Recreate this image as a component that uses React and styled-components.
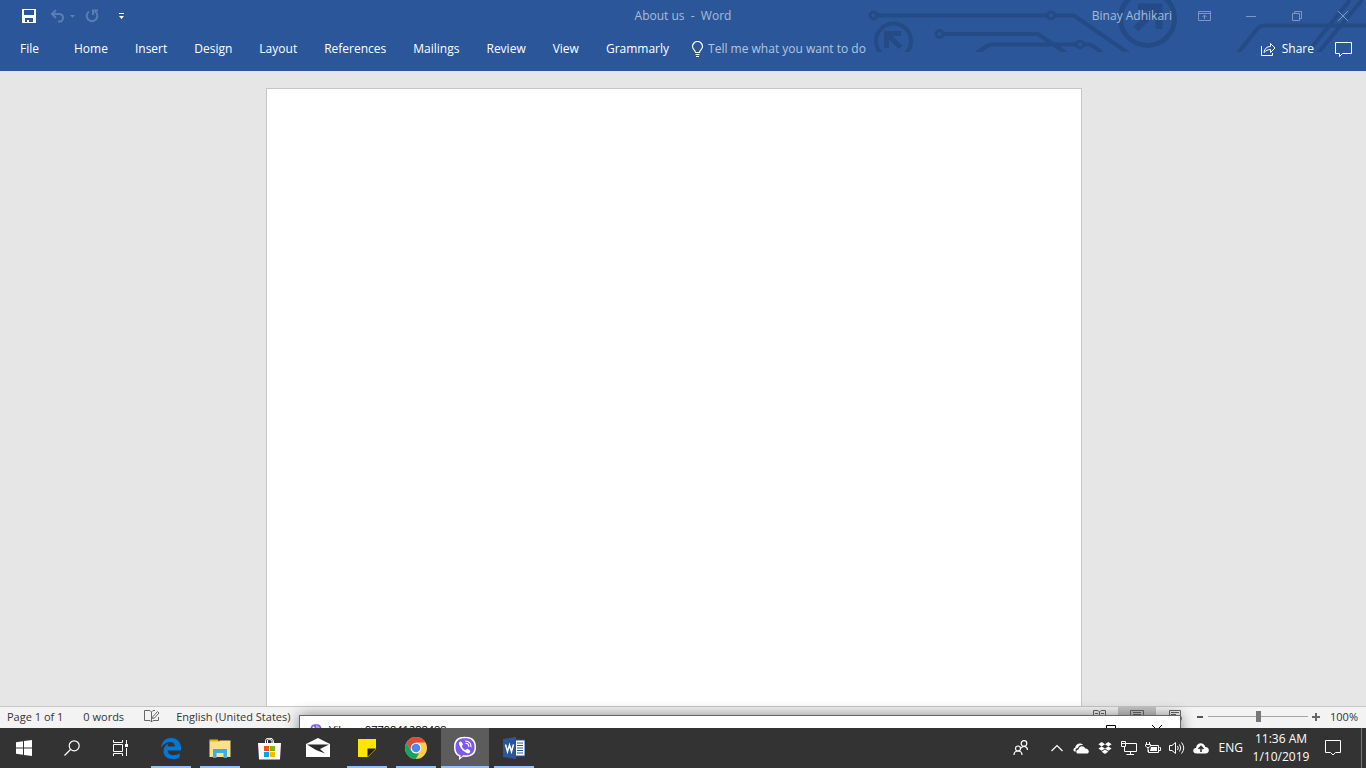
import styled, { createGlobalStyle } from "styled-components";

const tabs = ["File", "Home", "Insert", "Design", "Layout", "References", "Mailings", "Review", "View", "Grammarly"];

const GlobalStyle = createGlobalStyle`
  * {
    box-sizing: border-box;
  }

  body {
    margin: 0;
    overflow: hidden;
    font-family: "Open Sans", "Noto Sans", sans-serif;
    font-size: 12px;
    line-height: 16px;
  }

  button, input {
    font: inherit;
    color: inherit;
    margin: 0;
    padding: 0;
    border: 0;
    background: none;
  }

  svg {
    display: block;
    flex: none;
  }
`;

const Screen = styled.div`
  display: flex;
  flex-direction: column;
  height: 100vh;
  background: #e6e6e6;
`;

const Header = styled.header`
  position: relative;
  background: #2b579a;
  color: #fff;
  padding-bottom: 5px;
`;

const Circuit = styled.svg`
  position: absolute;
  top: 0;
  right: 0;
`;

const TitleBar = styled.div`
  position: relative;
  display: grid;
  grid-template-columns: 1fr auto 1fr;
  align-items: center;
  height: 32px;
`;

const QuickAccess = styled.div`
  display: flex;
  align-items: center;
  padding-left: 21px;
`;

const ToolButton = styled.button`
  display: grid;
  place-items: center;
  width: ${({ $width }) => $width || 16}px;
  height: 24px;
  margin-left: ${({ $gap }) => $gap || 0}px;
  color: ${({ $faded }) => ($faded ? "#5a7db2" : "#fff")};
`;

const Title = styled.h1`
  margin: 0;
  font-size: 12px;
  font-weight: 400;
  white-space: pre;
  color: #a9bcd8;
`;

const WindowControls = styled.div`
  display: flex;
  align-items: center;
  justify-content: flex-end;
  color: #a9bcd8;
`;

const Ribbon = styled.nav`
  position: relative;
  display: flex;
  align-items: center;
  height: 34px;
  padding: 0 14px 0 20px;
`;

const Tabs = styled.div`
  display: flex;
  gap: 27px;
`;

const Tab = styled.button`
  margin-right: ${({ $wide }) => ($wide ? 8 : 0)}px;
`;

const TellMe = styled.label`
  display: flex;
  align-items: center;
  gap: 4px;
  flex: 1;
  margin-left: 22px;

  input {
    width: 200px;
    outline: none;
  }

  input::placeholder {
    color: #b5c5de;
    opacity: 1;
  }
`;

const ShareButton = styled.button`
  display: flex;
  align-items: center;
  gap: 6px;
  margin-right: 21px;
`;

const Workspace = styled.main`
  display: flex;
  justify-content: center;
  flex: 1;
  min-height: 0;
  padding: 17px 18px 0 0;
`;

const Page = styled.article`
  width: 816px;
  background: #fff;
  border: 1px solid #c6c6c6;
  border-bottom: 0;
`;

const StatusBar = styled.footer`
  position: relative;
  display: flex;
  align-items: center;
  height: 22px;
  padding: 0 8px 2px 7px;
  background: #f3f3f3;
  border-top: 1px solid #c6c6c6;
  color: #333;
  font-size: 11px;
`;

const StatusButton = styled.button`
  margin-right: ${({ $gap }) => $gap || 20}px;
`;

const Views = styled.div`
  display: flex;
  align-self: flex-start;
  margin-left: auto;
`;

const ViewButton = styled.button`
  display: flex;
  justify-content: center;
  width: 38px;
  height: 21px;
  padding-top: 3px;
  background: ${({ $active }) => ($active ? "#c5c5c5" : "transparent")};
`;

const Zoom = styled.div`
  display: flex;
  align-items: center;
  gap: 4px;
  margin-left: 2px;
`;

const ZoomSlider = styled.input`
  appearance: none;
  width: 100px;
  height: 16px;
  background: linear-gradient(#a5a5a5, #a5a5a5) center / 100% 1px no-repeat;

  &::-webkit-slider-thumb {
    appearance: none;
    width: 5px;
    height: 11px;
    background: #777;
  }
`;

const ZoomLevel = styled.button`
  margin-left: 6px;
`;

/* The call window rises from behind the taskbar, only its top edge shows. */
const ViberWindow = styled.section`
  position: absolute;
  top: 8px;
  left: 299px;
  right: 185px;
  height: 34px;
  background: #fff;
  border: 1px solid #666;
  box-shadow: 0 0 14px rgba(0, 0, 0, 0.45);
  color: #000;
`;

const ViberTitle = styled.div`
  display: flex;
  align-items: center;
  height: 28px;
  padding: 0 18px 0 9px;
  gap: 6px;
`;

const ViberControls = styled.div`
  display: flex;
  gap: 36px;
  margin-left: auto;
`;

const Taskbar = styled.div`
  position: relative;
  display: flex;
  height: 40px;
  background: #333;
  color: #fff;
`;

const ShellButtons = styled.div`
  display: flex;
  margin-right: 3px;
`;

const TaskButton = styled.button`
  display: grid;
  place-items: center;
  width: 48px;
`;

const AppButton = styled(TaskButton)`
  margin-right: 1px;
  background: linear-gradient(#8cc3f8, #8cc3f8) bottom / ${({ $active }) => ($active ? "100%" : "40px")}
    ${({ $idle }) => ($idle ? 0 : 2)}px no-repeat ${({ $active }) => ($active ? "#5c5c5c" : "transparent")};
`;

const Tray = styled.div`
  display: flex;
  align-items: center;
  margin-left: auto;
`;

const TrayButton = styled.button`
  display: grid;
  place-items: center;
  width: 24px;
  height: 40px;
  margin-right: ${({ $gap }) => $gap || 0}px;
`;

const Clock = styled.time`
  width: 64px;
  margin: 0 8px 0 6px;
  font-size: 12px;
  line-height: 18px;
  text-align: center;
  white-space: nowrap;
`;

const ShowDesktop = styled.button`
  width: 5px;
  height: 40px;
  margin-left: 16px;
  border-left: 1px solid #777;
`;

const CircuitArt = () => (
  <Circuit width="500" height="52" viewBox="866 0 500 52" fill="none" stroke="#244b86" strokeWidth="4" aria-hidden="true">
    <circle cx="873.5" cy="15.5" r="3.5" strokeWidth="3" />
    <path d="M877 15.5H1047M1055 15.5H1074L1128 53" />
    <circle cx="1051" cy="15.5" r="3.5" strokeWidth="3" />
    <circle cx="893.5" cy="41" r="17.5" />
    <path d="M886.500 48V33.500H901M887 34L900.500 47.500" strokeWidth="5" />
    <circle cx="939.5" cy="34" r="3.5" strokeWidth="3" />
    <path d="M943 34H1038L1066 53M977 53L987 46Q990 44.500 993 44.500H1076M1084 44.500H1089Q1092 44.500 1102 53" />
    <circle cx="1080" cy="44.5" r="3.5" strokeWidth="3" />
    <circle cx="1147.500" cy="18.500" r="27" strokeWidth="5" />
    <path d="M1136 29L1157 8M1138 7H1159V29" strokeWidth="7" />
    <path d="M1238 53L1258 28Q1261 25.500 1264 25.500H1366M1307 53L1350 0M1318 53L1362 0" />
  </Circuit>
);

const DropboxIcon = () => (
  <svg width="14" height="14" viewBox="0 0 14 14" fill="#fff">
    <path d="M3.700 1L7 3.200 3.700 5.400 0.400 3.200ZM10.300 1L13.600 3.200 10.300 5.400 7 3.200ZM3.700 5.400L7 7.600 3.700 9.800 0.400 7.600ZM10.300 5.400L13.600 7.600 10.300 9.800 7 7.600ZM7 8.600L10.300 10.700 7 13 3.700 10.700Z" />
  </svg>
);

const ViberIcon = ({ size }) => (
  <svg width={size} height={size} viewBox="0 0 24 24">
    <path d="M12 .8C5 .8 1 3.500 1 11c0 5 1.700 8 5 9.300V24l4-3.200c8.500.7 13-2.200 13-9.800C23 3.500 19 .8 12 .8Z" fill="#fff" />
    <path d="M12 2.200C6 2.200 2.500 4.500 2.500 11c0 4.700 1.700 7.200 5 8.200v2.500l2.700-2.400c7.500.6 11.300-2 11.300-8.300 0-6.500-3.500-8.800-9.500-8.800Z" fill="#7d5be8" />
    <path d="M7.300 5.500C5.700 6.500 5.700 7.600 6.300 9c1.600 3.800 4.200 6.500 8 8.200 1.300.5 2.300-.2 3-1.500.4-.8-1.900-2.600-2.900-2.900-.8-.2-1.200 1.300-2 1.100-1.600-.5-3-2-3.500-3.700-.2-.7 1.200-1.200 1-2C9.600 7.100 8.200 5.200 7.300 5.500Z" fill="#fff" />
    <path d="M12.500 5c3.500.2 5.500 2.200 5.500 5.800M12.800 7.200c2 .2 3 1.300 3.100 3.300" fill="none" stroke="#fff" strokeWidth="1.1" strokeLinecap="round" />
  </svg>
);

const App = () => (
  <>
    <GlobalStyle />
    <Screen>
      <Header>
        <CircuitArt />
        <TitleBar>
          <QuickAccess>
            <ToolButton aria-label="Save">
              <svg width="14" height="14" viewBox="0 0 14 14" fill="currentColor">
                <path fillRule="evenodd" d="M0 0H14V14H0ZM2 1V6H12V1ZM3 9V13H5V11H7V13H11V9Z" />
              </svg>
            </ToolButton>
            <ToolButton aria-label="Undo" $gap={12} $faded>
              <svg width="15" height="14" viewBox="0 0 15 14" fill="none" stroke="currentColor" strokeWidth="2">
                <path d="M6 1L2 5L6 9M2 5H9Q13 5 13 9T8 12.500" />
              </svg>
            </ToolButton>
            <ToolButton aria-label="Undo history" $width={14} $faded>
              <svg width="5" height="3" fill="currentColor"><path d="M0 0H5L2.500 3Z" /></svg>
            </ToolButton>
            <ToolButton aria-label="Repeat" $gap={5} $faded>
              <svg width="14" height="14" viewBox="0 0 14 14" fill="none" stroke="currentColor" strokeWidth="2">
                <path d="M4 2.500A5.300 5.300 0 1 0 10 2.500M8 6V1.500H13" />
              </svg>
            </ToolButton>
            <ToolButton aria-label="Customize Quick Access Toolbar" $gap={13}>
              <svg width="5" height="6" fill="currentColor"><path d="M0 0H5V1H0ZM0 3H5L2.500 6Z" /></svg>
            </ToolButton>
          </QuickAccess>
          <Title>{"About us  -  Word"}</Title>
          <WindowControls>
            <button>Binay Adhikari</button>
            <ToolButton aria-label="Ribbon Display Options" $gap={24} $faded>
              <svg width="13" height="10" viewBox="0 0 13 10" fill="none" stroke="#7c98c2">
                <path d="M.5.5H12.500V9.500H.5ZM.5 2.500H12.500M6.500 8V4M4.500 6L6.500 4L8.500 6" />
              </svg>
            </ToolButton>
            <ToolButton aria-label="Minimize" $width={46} $gap={16}>
              <svg width="10" height="1"><path d="M0 .5H10" stroke="#7c98c2" /></svg>
            </ToolButton>
            <ToolButton aria-label="Restore Down" $width={46}>
              <svg width="10" height="10" viewBox="0 0 10 10" fill="none" stroke="#7c98c2">
                <path d="M.5 2.500H7.500V9.500H.5ZM2.500 2.500V.5H9.500V7.500H7.500" />
              </svg>
            </ToolButton>
            <ToolButton aria-label="Close" $width={46}>
              <svg width="10" height="10"><path d="M0 0L10 10M10 0L0 10" stroke="#7c98c2" /></svg>
            </ToolButton>
          </WindowControls>
        </TitleBar>
        <Ribbon>
          <Tabs>
            {tabs.map((tab) => (
              <Tab key={tab} $wide={tab === "File"}>{tab}</Tab>
            ))}
          </Tabs>
          <TellMe>
            <svg width="13" height="17" viewBox="0 0 13 17" fill="none" stroke="#fff" strokeWidth="1.2">
              <path d="M4.500 11.500C4.500 9 1.500 8.500 1.500 5.500A5 5 0 0 1 11.500 5.500C11.500 8.500 8.500 9 8.500 11.500ZM4.500 13.500H8.500M5 15.500H8" />
            </svg>
            <input aria-label="Tell me" placeholder="Tell me what you want to do" />
          </TellMe>
          <ShareButton>
            <svg width="16" height="15" viewBox="0 0 16 15" fill="none" stroke="#fff">
              <path d="M1.500 4V13.500H12.500V11M4 10.500C4.500 6.500 7 4.500 10.500 4.500V1.500L15 6L10.500 10.500V7.500C8 7.500 6 8.500 4 10.500Z" />
            </svg>
            Share
          </ShareButton>
          <button aria-label="Comments">
            <svg width="17" height="15" viewBox="0 0 17 15" fill="none" stroke="#fff">
              <path d="M.5.5H16.500V11.500H7.500L4.500 14.500V11.500H.5Z" />
            </svg>
          </button>
        </Ribbon>
      </Header>

      <Workspace>
        <Page aria-label="Document" />
      </Workspace>

      <StatusBar>
        <StatusButton>Page 1 of 1</StatusButton>
        <StatusButton>0 words</StatusButton>
        <StatusButton aria-label="Proofing" $gap={16}>
          <svg width="16" height="13" viewBox="0 0 16 13" fill="none" stroke="#666">
            <path d="M7.500 2V12M7.500 2L6 .5H.5V10.500H6L7.500 12L9 10.500H14.500V7M7.500 2L9 .5H11M8.500 8.500L9 6.500L13.500 1.500L15 3L10.500 8Z" />
          </svg>
        </StatusButton>
        <StatusButton>English (United States)</StatusButton>
        <Views>
          <ViewButton aria-label="Read Mode">
            <svg width="13" height="11" viewBox="0 0 13 11" fill="none" stroke="#666">
              <path d="M.5.5H5L6.500 2L8 .5H12.500V9.500H8L6.500 11L5 9.500H.5ZM6.500 2V10M2 3.500H5M2 5.500H5M8 3.500H11M8 5.500H11" />
            </svg>
          </ViewButton>
          <ViewButton aria-label="Print Layout" $active>
            <svg width="14" height="12" viewBox="0 0 14 12" fill="none" stroke="#666">
              <path d="M.5.5H13.500V11.500H.5ZM3 2.500H11M3 4.500H11M3 6.500H11" />
            </svg>
          </ViewButton>
          <ViewButton aria-label="Web Layout">
            <svg width="13" height="12" viewBox="0 0 13 12" fill="none" stroke="#666">
              <path d="M7 10.500H.5V.5H11.500V5M2 2.500H10M2 4.500H7M2 6.500H6" /><circle cx="9.5" cy="8.5" r="3" />
            </svg>
          </ViewButton>
        </Views>
        <Zoom>
          <button aria-label="Zoom Out"><svg width="8" height="8"><path d="M1 4H7" stroke="#555" strokeWidth="2" /></svg></button>
          <ZoomSlider type="range" min="0" max="200" defaultValue="101" aria-label="Zoom" />
          <button aria-label="Zoom In"><svg width="8" height="8"><path d="M0 4H8M4 0V8" stroke="#666" strokeWidth="2" /></svg></button>
          <ZoomLevel>100%</ZoomLevel>
        </Zoom>
        <ViberWindow>
          <ViberTitle>
            <ViberIcon size={14} />
            <span>Viber +9779841288488</span>
            <ViberControls>
              <button aria-label="Maximize Viber"><svg width="10" height="10"><path d="M.5.5H9.500V9.500H.5Z" fill="none" stroke="#000" /></svg></button>
              <button aria-label="Close Viber"><svg width="10" height="10"><path d="M0 0L10 10M10 0L0 10" stroke="#000" /></svg></button>
            </ViberControls>
          </ViberTitle>
        </ViberWindow>
      </StatusBar>

      <Taskbar>
        <ShellButtons>
          <TaskButton aria-label="Start">
            <svg width="16" height="16" fill="#fff"><path d="M0 2.200L7 1.200V7.500H0ZM8 1L16 0V7.500H8ZM0 8.500H7V14.800L0 13.800ZM8 8.500H16V16L8 15Z" /></svg>
          </TaskButton>
          <TaskButton aria-label="Search">
            <svg width="16" height="16" fill="none" stroke="#fff" strokeWidth="1.2"><circle cx="10.2" cy="5.8" r="5" /><path d="M6.500 9.500L.5 15.500" /></svg>
          </TaskButton>
          <TaskButton aria-label="Task View">
            <svg width="17" height="16" fill="none" stroke="#fff"><path d="M1.500 0V2.500H10.500V0M1.500 16V13.500H10.500V16M1.500 4.500H10.500V11.500H1.500ZM14.500 0V4M14.500 8V16" /><path d="M13 4H16V7H13Z" fill="#fff" stroke="none" /></svg>
          </TaskButton>
        </ShellButtons>
        <AppButton aria-label="Edge">
          <svg width="20" height="21" viewBox="0 0 20 21" fill="#0078d7"><path d="M0 9.500C1 3 5 0 10.300 0 16.500 0 20 4.500 20 10V12.500H6.700C6.900 16 9.500 17.200 12.500 17.200 15 17.200 17 16.500 18.700 15.500V19.500C16.500 20.600 14 21 11.500 21 6 21 2.500 17.800 2.500 13 2.500 9.800 4.500 7 7.500 5.500 6.900 6.400 6.600 7.500 6.500 8.600H13.800C13.800 5.500 12.300 4 9.300 4 5.500 4 2 6.500 0 9.500Z" /></svg>
        </AppButton>
        <AppButton aria-label="File Explorer">
          <svg width="22" height="19" viewBox="0 0 22 19"><path d="M.5.5H9L10 3H.5Z" fill="#f4b400" /><path d="M.5 2.500H10L11 1.500H21.500V18H.5Z" fill="#fde08a" /><path d="M4 10H18V19H14.500V14H7.500V19H4Z" fill="#3bafe0" /></svg>
        </AppButton>
        <AppButton aria-label="Microsoft Store" $idle>
          <svg width="23" height="23" viewBox="0 0 23 23"><path d="M7.500 6V3.500Q8 1 10 1.500L14 3.500V6M9.500 6V3Q11 .5 14 1.500Q15.500 2.500 15.500 6" fill="none" stroke="#fff" /><path d="M0 6H23L22 22.500H1Z" fill="#fff" /><path d="M6 9H11V14H6Z" fill="#f25022" /><path d="M12 9H17V14H12Z" fill="#7fba00" /><path d="M6 15H11V20H6Z" fill="#00a4ef" /><path d="M12 15H17V20H12Z" fill="#ffb900" /></svg>
        </AppButton>
        <AppButton aria-label="Mail" $idle>
          <svg width="24" height="20" viewBox="0 0 24 20"><path d="M0 6L12 0L24 6V19H0Z" fill="#fff" /><path d="M1 6.500H23L14 11L19 15.500L10 12Z" fill="#2b2b2b" /></svg>
        </AppButton>
        <AppButton aria-label="Sticky Notes">
          <svg width="18" height="18"><path d="M0 0H18V18H0Z" fill="#ffe500" /><path d="M9.500 9.500H18L9.500 18Z" fill="#222" /><path d="M18 10V18H10Z" fill="#333" /></svg>
        </AppButton>
        <AppButton aria-label="Chrome">
          <svg width="22" height="22" viewBox="0 0 22 22"><circle cx="11" cy="11" r="11" fill="#ffcd46" /><path d="M1.500 5.500A11 11 0 0 1 20.500 5.500H11L6.200 13.700Z" fill="#dd4b3e" /><path d="M1.500 5.500L6.200 13.700Q8 16.500 11 16.500H14L10.800 22A11 11 0 0 1 1.500 5.500Z" fill="#1ba261" /><circle cx="11" cy="11" r="5.3" fill="#fff" /><circle cx="11" cy="11" r="4.3" fill="#4a8af4" /></svg>
        </AppButton>
        <AppButton aria-label="Viber" $active><ViberIcon size={24} /></AppButton>
        <AppButton aria-label="Word">
          <svg width="22" height="22" viewBox="0 0 22 22"><path d="M12 3H22V19H12Z" fill="#fff" stroke="#2b579a" /><path d="M14 6H20M14 8.500H20M14 11H20M14 13.500H20M14 16H20" stroke="#2b579a" /><path d="M0 2L13 0V22L0 20Z" fill="#2b579a" /><path d="M2.500 7.500L4.500 14.500L6.500 8L8.500 14.500L10.500 7.500" fill="none" stroke="#fff" strokeWidth="1.5" /></svg>
        </AppButton>
        <Tray>
          <TrayButton aria-label="People" $gap={12}>
            <svg width="16" height="16" fill="none" stroke="#fff" strokeWidth="1.2"><circle cx="11" cy="3.5" r="2.8" /><circle cx="5" cy="8.5" r="2.5" /><path d="M1 15Q1 11 5 11T9 15M8 8Q11 5 13.500 7.500Q14.500 8.500 14.500 10" /></svg>
          </TrayButton>
          <TrayButton aria-label="Show hidden icons">
            <svg width="12" height="8" fill="none" stroke="#fff" strokeWidth="1.2"><path d="M.5 7L6 1.500L11.500 7" /></svg>
          </TrayButton>
          <TrayButton aria-label="OneDrive">
            <svg width="16" height="11" viewBox="0 0 16 11" fill="#fff"><path d="M1.500 8.500C0 8 0 5 2.200 4.700 2.500 1 7.500-1.500 10.500 2.300 7.500 1.500 5.500 3 5 5 2.700 5 2 7 3 8.500ZM5 10.500C2.500 10.500 2.800 6.500 5.500 6.500 6 2.500 11 2 12.200 5.500 16.500 5.500 17 10.500 13.500 10.500Z" /></svg>
          </TrayButton>
          <TrayButton aria-label="Dropbox"><DropboxIcon /></TrayButton>
          <TrayButton aria-label="Network">
            <svg width="16" height="14" fill="none" stroke="#fff"><path d="M5 2.500H15.500V10.500H3.500V6M9.500 10.500V13.500M5.500 13.500H13M.5.500H4.500V5.500H.5ZM1 2.500H4" /></svg>
          </TrayButton>
          <TrayButton aria-label="Battery">
            <svg width="16" height="12" fill="none" stroke="#fff"><path d="M5 3.500H13.500V10.500H3.500V8M14.500 5.500H15.500V8.500H14M1.500 0V2M4.500 0V2M.5 2.500H5.500V4L4 5.500H2L.5 4ZM3 5V10" /><path d="M6 5H12V9H5Z" fill="#fff" stroke="none" /></svg>
          </TrayButton>
          <TrayButton aria-label="Volume">
            <svg width="16" height="14" fill="none" stroke="#fff"><path d="M.5 4.500H3L6.500 1.500V12.500L3 9.500H.5ZM8.500 5Q10 7 8.500 9M10.500 3.500Q13 7 10.500 10.500M12.500 1.500Q17 7 12.500 12.500" /></svg>
          </TrayButton>
          <TrayButton aria-label="Cloud backup" $gap={6}>
            <svg width="16" height="11" viewBox="0 0 16 11"><path d="M3.500 10.500C-1 10.500-.5 5 3 5 3.500-.8 11-1.500 12.300 4 17 4 17 10.500 12.500 10.500Z" fill="#fff" /><path d="M8 9V4M5.500 6L8 3.500L10.500 6" fill="none" stroke="#333" strokeWidth="1.6" /></svg>
          </TrayButton>
          <button>ENG</button>
          <Clock>11:36 AM<br />1/10/2019</Clock>
          <TrayButton aria-label="Notifications">
            <svg width="16" height="16" fill="none" stroke="#fff"><path d="M.5.5H15.500V12.500H10.500L8 15L5.500 12.500H.5Z" /></svg>
          </TrayButton>
          <ShowDesktop aria-label="Show desktop" />
        </Tray>
      </Taskbar>
    </Screen>
  </>
);

export default App;
